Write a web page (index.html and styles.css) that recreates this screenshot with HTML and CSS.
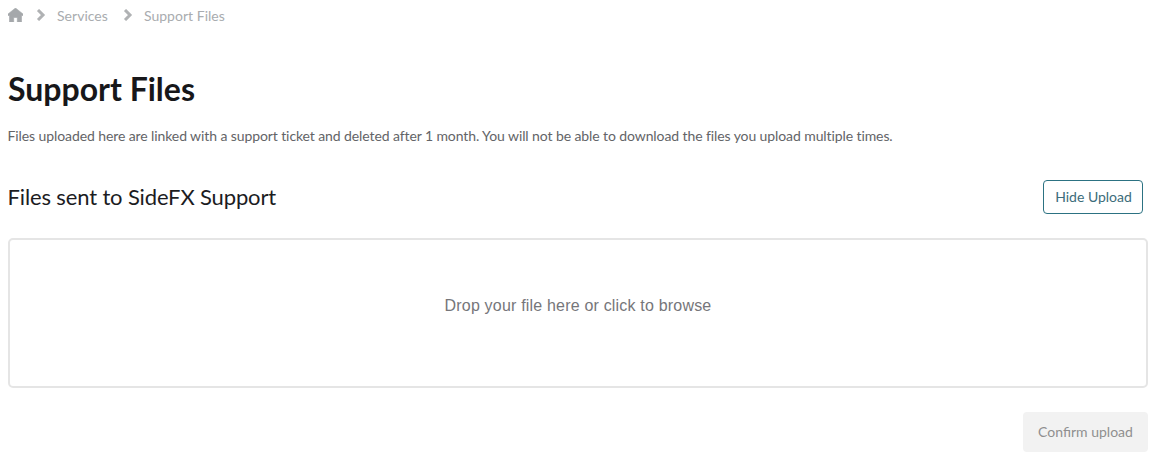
FILE: index.html
```html
<!DOCTYPE html>
<html lang="en">
<head>
<meta charset="utf-8">
<title>Support Files</title>
<link rel="stylesheet" href="styles.css">
</head>
<body>
<nav class="crumbs">
  <svg class="home" viewBox="0 0 15 14" width="15" height="14"><path d="M7.5 0 L15 6 L15 7.5 L13.5 7.5 L13.5 14 L9.3 14 L9.3 9.5 L5.7 9.5 L5.7 14 L1.5 14 L1.5 7.5 L0 7.5 L0 6 Z"/></svg>
  <svg class="chev" viewBox="0 0 10 12" width="10" height="12"><path d="M2 1 L7 6 L2 11"/></svg>
  <a>Services</a>
  <svg class="chev" viewBox="0 0 10 12" width="10" height="12"><path d="M2 1 L7 6 L2 11"/></svg>
  <a>Support Files</a>
</nav>
<h1>Support Files</h1>
<p class="intro">Files uploaded here are linked with a support ticket and deleted after 1 month. You will not be able to download the files you upload multiple times.</p>
<div class="head">
  <h2>Files sent to SideFX Support</h2>
  <button class="hide">Hide Upload</button>
</div>
<div class="drop">Drop your file here or click to browse</div>
<div class="actions"><button class="confirm">Confirm upload</button></div>
</body>
</html>
```
FILE: styles.css
```css
html, body { margin: 0; padding: 0; background: #fff; }
body { width: 1168px; height: 457px; overflow: hidden; font-family: Lato, sans-serif; color: #1a1a1a; box-sizing: border-box; padding: 0 20px 0 8px; }
.crumbs { display: flex; align-items: center; height: 30px; font-size: 14px; letter-spacing: 0.03px; color: #a9acaf; }
.home { fill: #a5a8ab; margin-top: -1px; stroke: #a5a8ab; stroke-width: 0.6; stroke-linejoin: round; }
.chev { fill: none; stroke: #b0b2b4; stroke-width: 3; margin-left: 13px; margin-right: 11px; margin-top: -1px; }
.crumbs a + .chev { margin-left: 15px; margin-right: 11px; }
h1 { margin: 27px 0 0; font-size: 32px; line-height: 64px; font-weight: 700; color: #17171a; height: 64px; }
.intro { margin: 0; font-size: 14px; letter-spacing: -0.095px; line-height: 20px; color: #636467; padding-top: 5px; text-indent: -0.5px; }
.head { display: flex; justify-content: space-between; align-items: center; margin-top: 34px; margin-right: 5px; height: 34px; }
h2 { margin: 0; font-size: 22px; letter-spacing: -0.14px; font-weight: 400; color: #1c1c1f; position: relative; top: -1px; left: -0.5px; }
button { font-family: Lato, sans-serif; font-size: 14px; box-sizing: border-box; }
.hide { height: 34px; width: 100px; border: 1px solid #2c7282; border-radius: 4px; background: #fff; color: #3c6c7a; padding: 0 0 1px 1px; }
.drop { box-sizing: border-box; margin-top: 24px; height: 150px; padding-bottom: 14px; border: 2px solid #e5e5e5; border-radius: 5px; display: flex; align-items: center; justify-content: center; font-family: "Liberation Sans", sans-serif; font-size: 16px; letter-spacing: 0.19px; color: #76767a; }
.actions { display: flex; justify-content: flex-end; margin-top: 24px; }
.confirm { width: 125px; height: 40px; border: 0; border-radius: 4px; background: #f2f2f2; color: #8f8f8f; padding: 0 0 2px; }
```
